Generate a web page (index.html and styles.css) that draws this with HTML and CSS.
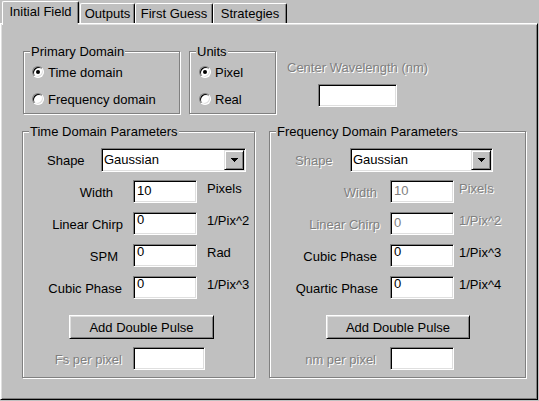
FILE: index.html
```html
<!DOCTYPE html>
<html>
<head>
<meta charset="utf-8">
<link rel="stylesheet" href="styles.css">
</head>
<body>
<div class="tabs">
  <div class="tab active t1">Initial Field</div>
  <div class="tab t2">Outputs</div>
  <div class="tab t3">First Guess</div>
  <div class="tab t4">Strategies</div>
</div>
<div class="page">
  <div class="top">
    <div class="frame primary">
      <span class="legend">Primary Domain</span>
      <div class="opt"><span class="radio on"></span><span>Time domain</span></div>
      <div class="opt"><span class="radio"></span><span>Frequency domain</span></div>
    </div>
    <div class="frame units">
      <span class="legend">Units</span>
      <div class="opt"><span class="radio on"></span><span>Pixel</span></div>
      <div class="opt"><span class="radio"></span><span>Real</span></div>
    </div>
    <div class="cw">
      <div class="dis">Center Wavelength (nm)</div>
      <div class="edit"></div>
    </div>
  </div>
  <div class="bottom">
    <div class="frame time">
      <span class="legend">Time Domain Parameters</span>
      <div class="shape-row">
        <span class="shape-lbl">Shape</span>
        <div class="combo"><span class="combo-text">Gaussian</span><span class="drop"><svg width="7" height="4" viewBox="0 0 7 4"><rect x="0" y="0" width="7" height="1"/><rect x="1" y="1" width="5" height="1"/><rect x="2" y="2" width="3" height="1"/><rect x="3" y="3" width="1" height="1"/></svg></span></div>
      </div>
      <div class="row">
        <span class="lbl pr10">Width</span>
        <div class="edit"><span class="val">10</span></div>
        <span class="unit">Pixels</span>
      </div>
      <div class="row">
        <span class="lbl">Linear Chirp</span>
        <div class="edit"><span class="val hi">0</span></div>
        <span class="unit">1/Pix^2</span>
      </div>
      <div class="row">
        <span class="lbl pr5">SPM</span>
        <div class="edit"><span class="val hi">0</span></div>
        <span class="unit">Rad</span>
      </div>
      <div class="row">
        <span class="lbl pr1">Cubic Phase</span>
        <div class="edit"><span class="val hi">0</span></div>
        <span class="unit">1/Pix^3</span>
      </div>
      <div class="btn">Add Double Pulse</div>
      <div class="row last">
        <span class="lbl pr1 dis">Fs per pixel</span>
        <div class="edit wide"></div>
      </div>
    </div>
    <div class="frame freq">
      <span class="legend">Frequency Domain Parameters</span>
      <div class="shape-row">
        <span class="shape-lbl dis">Shape</span>
        <div class="combo"><span class="combo-text">Gaussian</span><span class="drop"><svg width="7" height="4" viewBox="0 0 7 4"><rect x="0" y="0" width="7" height="1"/><rect x="1" y="1" width="5" height="1"/><rect x="2" y="2" width="3" height="1"/><rect x="3" y="3" width="1" height="1"/></svg></span></div>
      </div>
      <div class="row">
        <span class="lbl pr3 dis">Width</span>
        <div class="edit"><span class="val gray">10</span></div>
        <span class="unit dis">Pixels</span>
      </div>
      <div class="row">
        <span class="lbl dis">Linear Chirp</span>
        <div class="edit"><span class="val gray">0</span></div>
        <span class="unit dis">1/Pix^2</span>
      </div>
      <div class="row">
        <span class="lbl pr3">Cubic Phase</span>
        <div class="edit"><span class="val hi">0</span></div>
        <span class="unit">1/Pix^3</span>
      </div>
      <div class="row">
        <span class="lbl pr2">Quartic Phase</span>
        <div class="edit"><span class="val hi">0</span></div>
        <span class="unit">1/Pix^4</span>
      </div>
      <div class="btn">Add Double Pulse</div>
      <div class="row last">
        <span class="lbl pr4 dis">nm per pixel</span>
        <div class="edit"></div>
      </div>
    </div>
  </div>
</div>
</body>
</html>
```
FILE: styles.css
```css
html, body {
  margin: 0;
  padding: 0;
}
body {
  background: #c0c0c0;
  color: #000;
  font-family: "Liberation Sans", Arial, sans-serif;
  font-size: 13px;
  line-height: 15px;
  width: 539px;
  height: 401px;
  overflow: hidden;
}

/* ---------- tabs ---------- */
.tabs {
  display: flex;
  align-items: flex-start;
  height: 23px;
}
.tab {
  box-sizing: border-box;
  height: 20px;
  margin-top: 3px;
  border-left: 1px solid #fff;
  border-top: 1px solid #fff;
  border-right: 1px solid #000;
  box-shadow: inset -1px 0 #808080;
  border-radius: 2px 2px 0 0;
  text-align: center;
  padding-top: 2px;
  white-space: nowrap;
}
.tab.active {
  position: relative;
  z-index: 1;
  height: 22px;
  margin-top: 1px;
  margin-left: 2px;
}
.tab.active::after {
  content: "";
  position: absolute;
  left: 0;
  right: 0;
  top: 100%;
  height: 2px;
  background: #c0c0c0;
  box-shadow: -1px 0 #fff;
}
.t1 { width: 77px; }
.t2 { width: 55px; margin-left: 1px; }
.t3 { width: 78px; }
.t4 { width: 74px; }

/* ---------- page ---------- */
.page {
  box-sizing: border-box;
  width: 538px;
  height: 377px;
  border: 1px solid;
  border-color: #fff #000 #000 #fff;
  box-shadow: inset 1px 1px #dfdfdf, inset -1px -1px #808080;
  padding: 27px 0 0 21px;
}

.top {
  display: flex;
  align-items: flex-start;
  margin-left: 1px;
}
.bottom {
  display: flex;
  align-items: flex-start;
  margin-top: 17px;
}

/* ---------- group frames ---------- */
.frame {
  box-sizing: border-box;
  position: relative;
  border: 1px solid #808080;
  box-shadow: inset 1px 1px #fff, 1px 1px #fff;
}
.legend {
  position: absolute;
  top: -8px;
  left: 6px;
  padding: 0 1px;
  background: #c0c0c0;
  white-space: nowrap;
}

.primary {
  width: 157px;
  height: 63px;
  padding: 12px 0 0 8px;
}
.units {
  width: 87px;
  height: 63px;
  margin-left: 9px;
  padding: 12px 0 0 9px;
}
.opt {
  display: flex;
  align-items: center;
  height: 16px;
  white-space: nowrap;
}
.opt + .opt {
  margin-top: 11px;
}
.radio {
  box-sizing: border-box;
  flex: none;
  width: 12px;
  height: 12px;
  margin-right: 4px;
  border-radius: 50%;
  border: 1px solid;
  border-color: #808080 #fff #fff #808080;
  box-shadow: inset 1px 1px #000, inset -1px -1px #dfdfdf;
  background: #fff;
  display: flex;
  align-items: center;
  justify-content: center;
}
.radio.on::after {
  content: "";
  width: 4px;
  height: 4px;
  border-radius: 50%;
  background: #000;
}

.cw {
  margin-left: 11px;
  padding-top: 9px;
  white-space: nowrap;
}

/* ---------- disabled text ---------- */
.dis {
  color: #808080;
  text-shadow: 1px 1px 0 #fff;
}

/* ---------- parameter frames ---------- */
.time {
  width: 233px;
  height: 247px;
  padding-top: 16px;
}
.freq {
  width: 257px;
  height: 247px;
  margin-left: 14px;
  padding-top: 16px;
}
.shape-row {
  display: flex;
  height: 24px;
}
.shape-lbl {
  margin-top: 5px;
}
.time .shape-lbl {
  margin-left: 24px;
  width: 54px;
}
.freq .shape-lbl {
  margin-left: 25px;
  width: 55px;
}
.time .combo { width: 145px; }
.freq .combo { width: 143px; }

.row {
  display: flex;
  height: 23px;
  margin-top: 9px;
  white-space: nowrap;
}
.shape-row + .row {
  margin-top: 8px;
}
.row.last {
  margin-top: 8px;
}
.lbl {
  box-sizing: border-box;
  text-align: right;
  margin-top: 5px;
}
.time .lbl { width: 100px; }
.freq .lbl { width: 110px; }
.pr1 { padding-right: 1px; }
.pr2 { padding-right: 2px; }
.pr3 { padding-right: 3px; }
.pr4 { padding-right: 4px; }
.pr5 { padding-right: 5px; }
.pr10 { padding-right: 10px; }

.unit {
  margin-top: 1px;
}
.time .unit { margin-left: 10px; }
.freq .unit { margin-left: 5px; }

/* ---------- edit boxes ---------- */
.edit {
  box-sizing: border-box;
  flex: none;
  width: 64px;
  height: 23px;
  border: 1px solid;
  border-color: #808080 #fff #fff #808080;
  box-shadow: inset 1px 1px #000, inset -1px -1px #dfdfdf;
  background: #fff;
  padding-left: 3px;
}
.row .edit {
  margin-left: 10px;
}
.edit.wide {
  width: 72px;
}
.cw .edit {
  margin: 9px 0 0 31px;
  width: 79px;
}
.val {
  display: block;
  padding-top: 2px;
}
.val.hi {
  padding-top: 0;
  line-height: 13px;
}
.val.gray {
  color: #808080;
}

/* ---------- combo ---------- */
.combo {
  box-sizing: border-box;
  flex: none;
  display: flex;
  height: 24px;
  border: 1px solid;
  border-color: #808080 #fff #fff #808080;
  box-shadow: inset 1px 1px #000, inset -1px -1px #dfdfdf;
  background: #fff;
}
.combo-text {
  padding: 3px 0 0 2px;
}
.drop {
  box-sizing: border-box;
  width: 20px;
  height: 20px;
  margin: 1px 1px 1px auto;
  border: 1px solid;
  border-color: #dfdfdf #000 #000 #dfdfdf;
  box-shadow: inset 1px 1px #fff, inset -1px -1px #808080;
  background: #c0c0c0;
  display: flex;
  align-items: center;
  justify-content: center;
}
.drop svg {
  display: block;
  fill: #000;
  shape-rendering: crispEdges;
}

/* ---------- push button ---------- */
.btn {
  box-sizing: border-box;
  height: 24px;
  margin-top: 16px;
  border: 1px solid;
  border-color: #fff #000 #000 #fff;
  box-shadow: inset 1px 1px #dfdfdf, inset -1px -1px #808080;
  background: #c0c0c0;
  text-align: center;
  padding-top: 4px;
  white-space: nowrap;
}
.time .btn {
  width: 145px;
  margin-left: 46px;
}
.freq .btn {
  width: 144px;
  margin-left: 56px;
}
```
